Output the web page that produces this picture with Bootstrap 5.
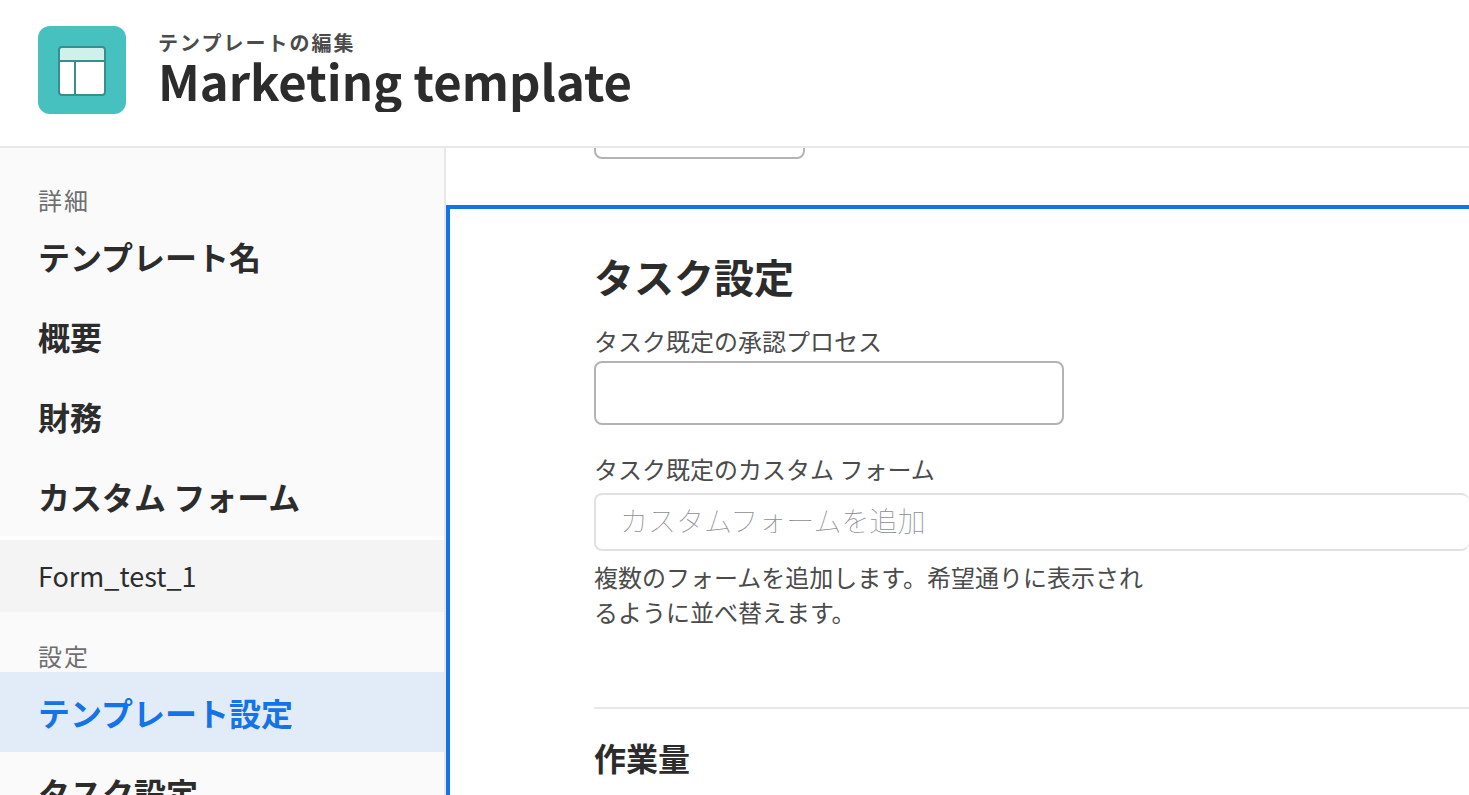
<!DOCTYPE html>
<html lang="ja">
<head>
<meta charset="utf-8">
<meta name="viewport" content="width=device-width, initial-scale=1">
<title>テンプレートの編集</title>
<link href="https://cdn.jsdelivr.net/npm/bootstrap@5.3.0/dist/css/bootstrap.min.css" rel="stylesheet">
<style>
body{font-family:"Noto Sans CJK JP",sans-serif;color:#2c2c2c}
.app{height:100vh}
.top-bar{height:148px;border-bottom:2px solid #e8e8e8;padding:26px 38px 0}
.app-icon{width:88px;height:88px}
.eyebrow{font-size:20px;line-height:22px;letter-spacing:2px;font-weight:700;color:#4b4b4b;margin-top:6px}
.page-title{font-size:49px;line-height:52px;font-weight:700;padding-bottom:6px;overflow:hidden;white-space:nowrap}
.side{width:446px;background:#fafafa;border-right:2px solid #e8e8e8;padding-top:36px}
.side-head{font-size:24px;line-height:32px;letter-spacing:2px;color:#6e6e6e;padding:0 38px;margin:0;font-weight:400}
.side-head.later{margin-top:28px}
.side-link{display:block;height:80px;line-height:80px;padding:0 38px;font-size:32px;font-weight:700;color:#2c2c2c;text-decoration:none;white-space:nowrap}
.side-link.sub{height:72px;line-height:72px;background:#f4f4f4;font-size:27px;font-weight:400}
.side-link.current{background:#e2ecf9;color:#1473e6}
.sub-wrap{border-top:4px solid #fff}
.prev-field{width:211px;height:64px;border:2px solid #b3b3b3;border-radius:8px;margin:-53px 0 46px 148px}
.panel{border:4px solid #1473e6;border-right:0;border-bottom:0;padding:36px 0 0 144px}
.panel h2{font-size:40px;line-height:62px;font-weight:700;margin:0 0 16px}
.field-label{font-size:24px;line-height:36px;color:#4b4b4b;margin-bottom:2px}
.field-label.spaced{margin:26px 0 6px}
.line-field{width:470px;height:64px;border:2px solid #b3b3b3;border-radius:8px}
.form-field{width:100%;height:58px;border:2px solid #e1e1e1;border-radius:8px;border-right:0;font-size:28px;padding:0 24px 4px}
.form-field::placeholder{color:#8e8e96;font-weight:100;opacity:1}
.hint{font-size:24px;line-height:35px;color:#4b4b4b;max-width:556px;margin:8px 0 0}
.panel hr{margin:78px 0 28px;border-top:2px solid #e8e8e8;opacity:1}
.panel h3{font-size:32px;line-height:40px;font-weight:700}
</style>
<script src="https://cdn.jsdelivr.net/npm/bootstrap@5.3.0/dist/js/bootstrap.bundle.min.js"></script>
</head>
<body>
<div class="app d-flex flex-column overflow-hidden">
<header class="top-bar d-flex flex-shrink-0">
<svg class="app-icon flex-shrink-0" viewBox="0 0 88 88" aria-hidden="true"><rect width="88" height="88" rx="12" fill="#47c1bf"/><rect x="21" y="21" width="46" height="48" rx="3" fill="#fff"/><path d="M21 35V24a3 3 0 0 1 3-3h40a3 3 0 0 1 3 3v11z" fill="#d0f0ec"/><path d="M21 35h46M37 35v34" stroke="#378f8d" stroke-width="2"/><rect x="21" y="21" width="46" height="48" rx="3" fill="none" stroke="#378f8d" stroke-width="2"/></svg>
<div class="ms-4 ps-2"><div class="eyebrow">テンプレートの編集</div><h1 class="page-title m-0">Marketing template</h1></div>
</header>
<div class="d-flex flex-grow-1 overflow-hidden">
<nav class="side flex-shrink-0 overflow-hidden">
<h2 class="side-head">詳細</h2>
<a class="side-link" href="#">テンプレート名</a><a class="side-link" href="#">概要</a><a class="side-link" href="#">財務</a><a class="side-link" href="#">カスタム フォーム</a>
<div class="sub-wrap"><a class="side-link sub" href="#">Form_test_1</a></div>
<h2 class="side-head later">設定</h2>
<a class="side-link current" href="#">テンプレート設定</a><a class="side-link" href="#">タスク設定</a>
</nav>
<main class="d-flex flex-column flex-grow-1 overflow-hidden">
<input class="prev-field flex-shrink-0" aria-label="設定値">
<section class="panel flex-grow-1">
<h2>タスク設定</h2>
<label class="field-label d-block" for="approval">タスク既定の承認プロセス</label><input id="approval" class="line-field d-block">
<label class="field-label spaced d-block" for="forms">タスク既定のカスタム フォーム</label><input id="forms" class="form-field d-block" placeholder="カスタムフォームを追加">
<p class="hint">複数のフォームを追加します。希望通りに表示されるように並べ替えます。</p>
<hr><h3>作業量</h3>
</section>
</main>
</div>
</div>
</body>
</html>
